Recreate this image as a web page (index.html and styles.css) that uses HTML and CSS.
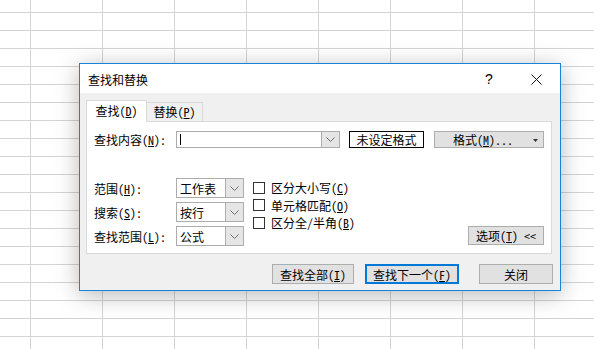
FILE: index.html
```html
<!DOCTYPE html>
<html lang="zh-CN">
<head>
    <meta charset="UTF-8">
    <meta name="viewport" content="width=device-width, initial-scale=1.0">
    <title>查找和替换</title>
    <link rel="stylesheet" href="styles.css">
</head>
<body>
    <div class="dialog">
        <div class="titlebar">
            <span class="title">查找和替换</span>
            <span class="help">?</span>
            <span class="close">
                <svg width="11" height="11" viewBox="0 0 11 11"><path d="M0.5 0.5 L10.5 10.5 M10.5 0.5 L0.5 10.5" stroke="#111" stroke-width="1" fill="none"/></svg>
            </span>
        </div>

        <div class="tabs">
            <div class="tab active">查找(<u>D</u>)</div>
            <div class="tab">替换(<u>P</u>)</div>
        </div>

        <div class="panel">
            <div class="find-row">
                <span class="label">查找内容(<u>N</u>):</span>
                <div class="combo combo-find">
                    <span class="value"><span class="cursor"></span></span>
                    <span class="drop">
                        <svg width="9" height="5" viewBox="0 0 9 5"><polyline points="0.5,0.5 4.5,4.5 8.5,0.5" stroke="#6d6d6d" fill="none"/></svg>
                    </span>
                </div>
                <div class="preview">未设定格式</div>
                <button class="btn btn-format">格式(<u>M</u>)...
                    <svg class="tri" width="5" height="3" viewBox="0 0 5 3"><polygon points="0,0 5,0 2.5,3" fill="#333"/></svg>
                </button>
            </div>

            <div class="options">
                <div class="fields">
                    <div class="field">
                        <span class="label">范围(<u>H</u>):</span>
                        <div class="combo combo-small">
                            <span class="value">工作表</span>
                            <span class="drop"><svg width="9" height="5" viewBox="0 0 9 5"><polyline points="0.5,0.5 4.5,4.5 8.5,0.5" stroke="#6d6d6d" fill="none"/></svg></span>
                        </div>
                    </div>
                    <div class="field">
                        <span class="label">搜索(<u>S</u>):</span>
                        <div class="combo combo-small">
                            <span class="value">按行</span>
                            <span class="drop"><svg width="9" height="5" viewBox="0 0 9 5"><polyline points="0.5,0.5 4.5,4.5 8.5,0.5" stroke="#6d6d6d" fill="none"/></svg></span>
                        </div>
                    </div>
                    <div class="field">
                        <span class="label">查找范围(<u>L</u>):</span>
                        <div class="combo combo-small">
                            <span class="value">公式</span>
                            <span class="drop"><svg width="9" height="5" viewBox="0 0 9 5"><polyline points="0.5,0.5 4.5,4.5 8.5,0.5" stroke="#6d6d6d" fill="none"/></svg></span>
                        </div>
                    </div>
                </div>

                <div class="checks">
                    <label class="check"><span class="box"></span>区分大小写(<u>C</u>)</label>
                    <label class="check"><span class="box"></span>单元格匹配(<u>O</u>)</label>
                    <label class="check"><span class="box"></span>区分全/半角(<u>B</u>)</label>
                </div>

                <button class="btn btn-options">选项(<u>T</u>) &lt;&lt;</button>
            </div>
        </div>

        <div class="actions">
            <button class="btn btn-all">查找全部(<u>I</u>)</button>
            <button class="btn btn-next">查找下一个(<u>F</u>)</button>
            <button class="btn btn-close">关闭</button>
        </div>
    </div>
</body>
</html>
```

FILE: styles.css
```css
html, body {
    margin: 0;
    padding: 0;
}
body {
    width: 594px;
    height: 349px;
    overflow: hidden;
    position: relative;
    background-color: #ffffff;
    background-image:
        linear-gradient(to right, #d4d4d4 1px, transparent 1px),
        linear-gradient(to bottom, #d4d4d4 1px, transparent 1px);
    background-size: 72px 18px;
    background-position: 30px 12px;
    font-family: "Noto Sans Mono CJK SC", "Noto Sans CJK SC", sans-serif;
    font-size: 12px;
    color: #000;
}
u {
    text-decoration: underline;
    text-underline-offset: 1px;
}

/* dialog window floating over the sheet */
.dialog {
    position: absolute;
    left: 79px;
    top: 63px;
    width: 482px;
    height: 228px;
    box-sizing: border-box;
    border: 1px solid #1883d7;
    background: #f0f0f0;
    box-shadow: 0 4px 22px rgba(0, 0, 0, 0.28);
}
.titlebar {
    height: 29px;
    background: #fff;
    display: flex;
    align-items: center;
    padding-left: 8px;
}
.title {
    font-family: "Noto Sans CJK SC", sans-serif;
    font-size: 12px;
    flex: 1;
    margin-top: 1px;
}
.help {
    font-family: "Liberation Sans", sans-serif;
    font-size: 14px;
    width: 14px;
    margin-right: 32px;
    margin-top: 1px;
}
.close {
    display: flex;
    margin-right: 18px;
    margin-top: 1px;
}

/* tabs */
.tabs {
    display: flex;
    align-items: flex-end;
    margin: 7px 0 0 6px;
    height: 21px;
}
.tab {
    box-sizing: border-box;
    height: 19px;
    width: 56px;
    border: 1px solid #d9d9d9;
    border-left: none;
    border-bottom: none;
    background: #f0f0f0;
    display: flex;
    align-items: center;
    justify-content: center;
    line-height: 1;
}
.tab.active {
    width: 61px;
    height: 22px;
    border-left: 1px solid #d9d9d9;
    background: #fff;
    position: relative;
    z-index: 1;
    margin-bottom: -1px;
    padding-bottom: 1px;
}

.panel {
    box-sizing: border-box;
    margin-left: 6px;
    width: 466px;
    height: 133px;
    border: 1px solid #d9d9d9;
    background: #fff;
    padding: 9px 7px 7px 7px;
    display: flex;
    flex-direction: column;
}
.find-row {
    display: flex;
    align-items: center;
    height: 17px;
}
.find-row .label {
    width: 82px;
}
.label {
    white-space: nowrap;
}

.combo {
    box-sizing: border-box;
    border: 1px solid #acacac;
    background: #fff;
    display: flex;
    align-items: stretch;
}
.combo .value {
    flex: 1;
    display: flex;
    align-items: center;
    padding-left: 3px;
}
.combo .drop {
    width: 17px;
    background: #e5e5e5;
    border-left: 1px solid #acacac;
    display: flex;
    align-items: center;
    justify-content: center;
}
.combo-find {
    width: 164px;
    height: 17px;
    margin-right: 9px;
}
.cursor {
    width: 1px;
    height: 11px;
    background: #000;
}
.combo-small {
    width: 68px;
    height: 20px;
}

.preview {
    box-sizing: border-box;
    width: 75px;
    height: 17px;
    border: 1px solid #000;
    display: flex;
    align-items: center;
    justify-content: center;
    margin-right: 10px;
}

.btn {
    box-sizing: border-box;
    font-family: inherit;
    font-size: 12px;
    color: #000;
    background: #e1e1e1;
    border: 1px solid #adadad;
    border-radius: 0;
    padding: 0;
    height: 20px;
    display: flex;
    align-items: center;
    justify-content: center;
}
.btn-format {
    width: 110px;
    height: 17px;
    position: relative;
    padding-right: 12px;
}
.btn-format .tri {
    position: absolute;
    right: 5px;
    top: 7px;
}

.options {
    display: flex;
    margin-top: 30px;
    flex: 1;
}
.fields {
    display: flex;
    flex-direction: column;
    gap: 4px;
}
.field {
    display: flex;
    align-items: center;
}
.field .label {
    width: 82px;
}
.checks {
    margin-left: 9px;
    display: flex;
    flex-direction: column;
    padding-top: 1px;
}
.check {
    display: flex;
    align-items: center;
    height: 17.5px;
    white-space: nowrap;
}
.box {
    box-sizing: border-box;
    width: 12px;
    height: 12px;
    border: 1px solid #333;
    background: #fff;
    margin-right: 6px;
}
.btn-options {
    width: 76px;
    height: 19px;
    margin-left: auto;
    align-self: flex-end;
    margin-bottom: 1px;
}

.actions {
    display: flex;
    margin-top: 10px;
    padding-left: 192px;
}
.btn-all {
    width: 82px;
}
.btn-next {
    width: 94px;
    margin-left: 11px;
    border: 2px solid #0078d7;
}
.btn-close {
    width: 74px;
    margin-left: 20px;
}
```
